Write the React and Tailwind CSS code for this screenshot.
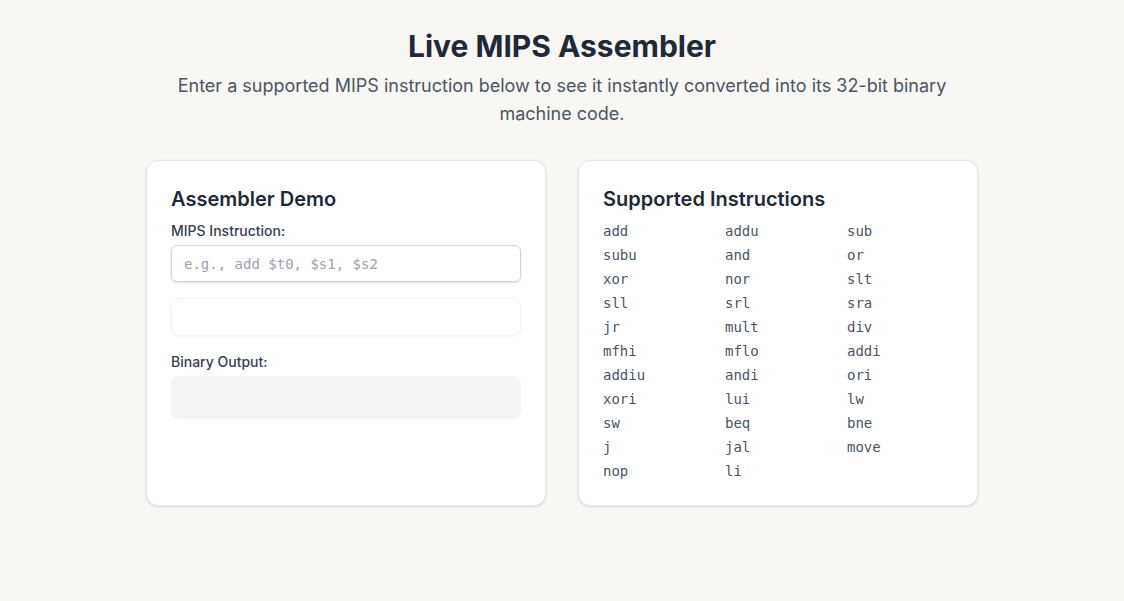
import React from "react";

const instructions = [
  "add","addu","sub","subu","and","or","xor","nor","slt","sll","srl","sra",
  "jr","mult","div","mfhi","mflo","addi","addiu","andi","ori","xori","lui","lw",
  "sw","beq","bne","j","jal","move","nop","li",
];

const mono = { fontFamily: '"DejaVu Sans Mono", "Liberation Mono", monospace' };

export default function App() {
  return (
    <div
      className="min-h-[601px] w-full bg-[#f8f7f4] pt-7 text-[#1f2937]"
      style={{ fontFamily: 'Inter, "Noto Sans", sans-serif' }}
    >
      <div className="mx-auto max-w-[800px] text-center">
        <h1 className="text-3xl font-bold text-[#1f2937]">Live MIPS Assembler</h1>
        <p className="mt-2 text-lg leading-7 text-[#4b5563]">
          Enter a supported MIPS instruction below to see it instantly converted into its 32-bit binary machine code.
        </p>
      </div>

      <div className="mx-auto mt-8 grid max-w-[896px] grid-cols-2 gap-8 px-8">
        <div className="rounded-xl border border-[#e5e7eb] bg-white p-6 shadow-sm">
          <h2 className="mb-2 text-xl font-semibold text-[#1f2937]">Assembler Demo</h2>
          <label className="mb-1 block text-sm font-medium text-[#374151]">MIPS Instruction:</label>
          <input
            type="text"
            placeholder="e.g., add $t0, $s1, $s2"
            className="h-[37px] w-full rounded-md border border-[#d1d5db] px-3 text-sm text-[#374151] shadow-sm outline-none placeholder:text-[#9ca3af]"
            style={mono}
          />
          <div className="mt-4 h-[38px] rounded-lg border border-[#f3f4f6] bg-white shadow-[0_1px_2px_rgba(0,0,0,0.03)]"></div>
          <label className="mb-1 mt-4 block text-sm font-medium text-[#374151]">Binary Output:</label>
          <div className="h-[43px] rounded-lg bg-[#f3f4f6]" style={mono}></div>
        </div>

        <div className="rounded-xl border border-[#e5e7eb] bg-white p-6 shadow-sm">
          <h2 className="mb-2 text-xl font-semibold text-[#1f2937]">Supported Instructions</h2>
          <div className="grid grid-cols-3 gap-x-4 gap-y-1 text-sm text-[#4b5563]" style={mono}>
            {instructions.map((ins) => (
              <span key={ins} className="leading-5">{ins}</span>
            ))}
          </div>
        </div>
      </div>
    </div>
  );
}
